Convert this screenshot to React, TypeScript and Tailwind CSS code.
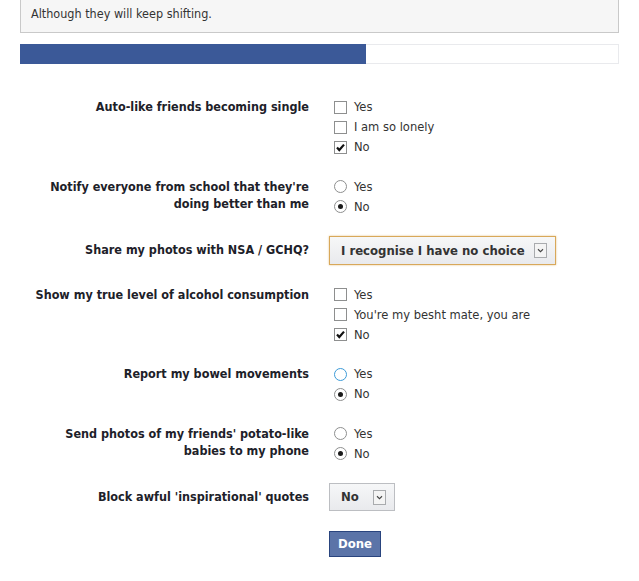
import React from "react";

const font = "font-['DejaVu_Sans',sans-serif] font-stretch-condensed";

const Checkbox = ({ checked }: { checked?: boolean }) => (
  <span className="relative inline-block w-[13px] h-[13px] border border-[#8e8f8f] bg-white shrink-0">
    {checked && (
      <svg viewBox="0 0 13 13" className="absolute -left-px -top-px w-[13px] h-[13px]">
        <path d="M3 6.5 L5.3 9 L10 3.6" stroke="#111" strokeWidth="2.2" fill="none" />
      </svg>
    )}
  </span>
);

const Radio = ({ checked, focus }: { checked?: boolean; focus?: boolean }) => (
  <span
    className={
      "flex items-center justify-center w-[13px] h-[13px] rounded-full border bg-white shrink-0 " +
      (focus ? "border-[#3d9bd8]" : "border-[#8e8f8f]")
    }
  >
    {checked && <span className="w-[5px] h-[5px] rounded-full bg-[#1a1a1a]" />}
  </span>
);

type Opt = { label: string; checked?: boolean; focus?: boolean };

const Options = ({ kind, opts }: { kind: "check" | "radio"; opts: Opt[] }) => (
  <div className="flex flex-col ml-[5px]">
    {opts.map((o) => (
      <label key={o.label} className="flex items-center h-5 gap-[7px] text-[12.8px] text-[#333]">
        {kind === "check" ? <Checkbox checked={o.checked} /> : <Radio checked={o.checked} focus={o.focus} />}
        <span>{o.label}</span>
      </label>
    ))}
  </div>
);

const Row = ({ label, children, pt = "pt-[1px]" }: { label: React.ReactNode; children: React.ReactNode; pt?: string }) => (
  <div className="flex">
    <div className={"w-[309px] text-right text-[12.5px] font-bold leading-[17px] text-[#1d2129] " + pt}>{label}</div>
    <div className="pl-[20px]">{children}</div>
  </div>
);

const Select = ({ value, focus }: { value: string; focus?: boolean }) => (
  <div
    className={
      "flex items-center justify-between pl-[11px] pr-[8px] gap-[9px] bg-gradient-to-b from-[#f6f7f8] to-[#e9eaed] border text-[13px] font-bold text-[#333] " +
      (focus ? "h-[29px] border-[#d8a85a] shadow-[0_0_2px_#e5c58c]" : "h-[28px] border-[#bcbec2]")
    }
  >
    <span>{value}</span>
    <span className="flex items-center justify-center w-[13px] h-[15px] border border-[#a9abae] bg-[#f4f4f4]">
      <svg viewBox="0 0 8 6" className="w-[7px] h-[5px]">
        <path d="M1 1.5 L4 4.5 L7 1.5" stroke="#444" strokeWidth="1.3" fill="none" />
      </svg>
    </span>
  </div>
);

export default function App() {
  return (
    <div className={"w-[639px] h-[581px] bg-white overflow-hidden " + font}>
      <div className="mx-[20px] h-[33px] border-x border-b border-[#c9c9c9] bg-[#f6f6f6] pl-[10px] pt-[5px] text-[12.5px] text-[#333]">
        Although they will keep shifting.
      </div>
      <div className="mx-[20px] mt-[11px] h-[20px] border border-[#e9eaed] bg-white">
        <div className="-m-px h-[20px] w-[346px] bg-[#3b5998]" />
      </div>
      <div className="mt-[33px] flex flex-col gap-[19.5px]">
        <Row label="Auto-like friends becoming single">
          <Options kind="check" opts={[{ label: "Yes" }, { label: "I am so lonely" }, { label: "No", checked: true }]} />
        </Row>
        <Row label={<>Notify everyone from school that they're<br />doing better than me</>}>
          <Options kind="radio" opts={[{ label: "Yes" }, { label: "No", checked: true }]} />
        </Row>
        <Row label="Share my photos with NSA / GCHQ?" pt="pt-[5px]">
          <Select value="I recognise I have no choice" focus />
        </Row>
        <Row label="Show my true level of alcohol consumption">
          <Options
            kind="check"
            opts={[{ label: "Yes" }, { label: "You're my besht mate, you are" }, { label: "No", checked: true }]}
          />
        </Row>
        <Row label="Report my bowel movements">
          <Options kind="radio" opts={[{ label: "Yes", focus: true }, { label: "No", checked: true }]} />
        </Row>
        <Row label={<>Send photos of my friends' potato-like<br />babies to my phone</>}>
          <Options kind="radio" opts={[{ label: "Yes" }, { label: "No", checked: true }]} />
        </Row>
        <Row label="Block awful 'inspirational' quotes" pt="pt-[5px]">
          <div className="w-[66px]">
            <Select value="No" />
          </div>
        </Row>
        <div className="pl-[329px]">
          <button className="h-[26px] px-[8px] bg-[#5b74a8] border border-[#29447e] text-white text-[13px] font-bold">
            Done
          </button>
        </div>
      </div>
    </div>
  );
}
